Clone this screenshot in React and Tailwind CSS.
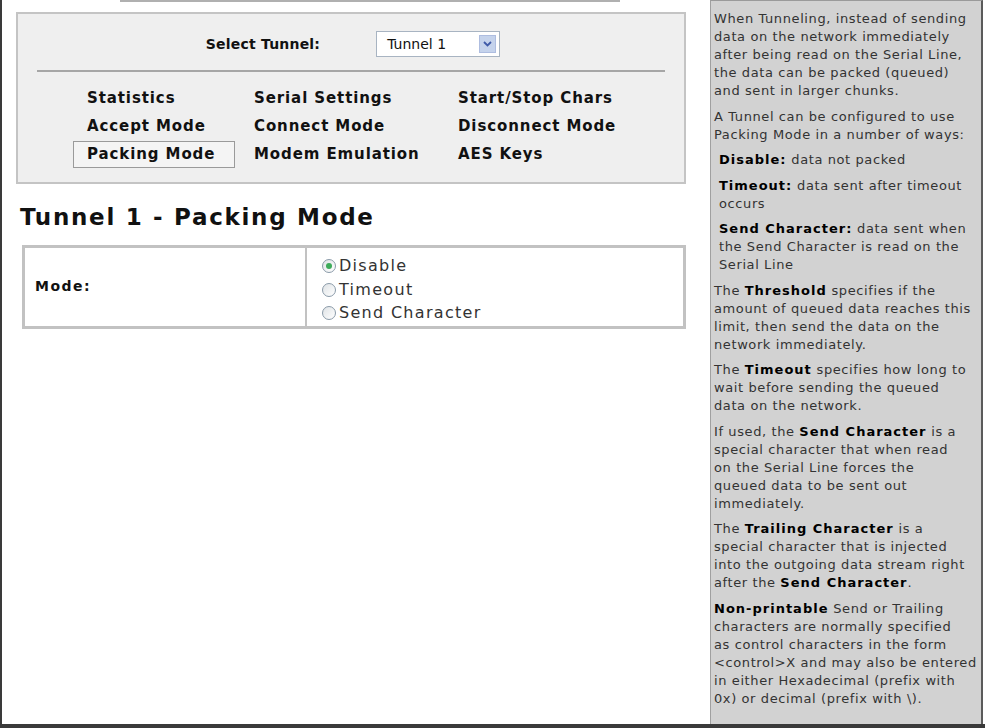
import { useState } from "react";

const links = [
  ["Statistics", "Serial Settings", "Start/Stop Chars"],
  ["Accept Mode", "Connect Mode", "Disconnect Mode"],
  ["Packing Mode", "Modem Emulation", "AES Keys"],
];

// help text, one entry per line as wrapped in the original panel; **x** = bold
const help = [
  {
    lines: [
      "When Tunneling, instead of sending",
      "data on the network immediately",
      "after being read on the Serial Line,",
      "the data can be packed (queued)",
      "and sent in larger chunks.",
    ],
  },
  { lines: ["A Tunnel can be configured to use", "Packing Mode in a number of ways:"] },
  { indent: true, lines: ["**Disable:** data not packed"] },
  { indent: true, lines: ["**Timeout:** data sent after timeout", "occurs"] },
  {
    indent: true,
    lines: ["**Send Character:** data sent when", "the Send Character is read on the", "Serial Line"],
  },
  {
    lines: [
      "The **Threshold** specifies if the",
      "amount of queued data reaches this",
      "limit, then send the data on the",
      "network immediately.",
    ],
  },
  {
    lines: ["The **Timeout** specifies how long to", "wait before sending the queued", "data on the network."],
  },
  {
    lines: [
      "If used, the **Send Character** is a",
      "special character that when read",
      "on the Serial Line forces the",
      "queued data to be sent out",
      "immediately.",
    ],
  },
  {
    lines: [
      "The **Trailing Character** is a",
      "special character that is injected",
      "into the outgoing data stream right",
      "after the **Send Character**.",
    ],
  },
  {
    lines: [
      "**Non-printable** Send or Trailing",
      "characters are normally specified",
      "as control characters in the form",
      "<control>X and may also be entered",
      "in either Hexadecimal (prefix with",
      "0x) or decimal (prefix with \\).",
    ],
  },
];

function Line({ text }) {
  const parts = text.split("**");
  return (
    <div className="whitespace-nowrap">
      {parts.map((p, i) =>
        i % 2 ? (
          <b key={i} className="text-black tracking-[1px]">{p}</b>
        ) : (
          <span key={i}>{p}</span>
        )
      )}
    </div>
  );
}

function Radio({ checked, label, onClick }) {
  return (
    <label className="flex items-center gap-[3px] h-[23.5px] cursor-pointer" onClick={onClick}>
      <span className="w-[14px] h-[14px] rounded-full border border-[#8a9aa8] bg-gradient-to-br from-[#dfe3e6] to-white flex items-center justify-center">
        {checked && <span className="w-[6px] h-[6px] rounded-full bg-[#3dab5a]" />}
      </span>
      <span>{label}</span>
    </label>
  );
}

export default function App() {
  const [mode, setMode] = useState("Disable");

  return (
    <div className="w-[985px] h-[728px] flex bg-white border-l-2 border-b-4 border-[#3a3a3a] overflow-hidden font-['DejaVu_Sans',sans-serif] text-[#111]">
      {/* main column */}
      <div className="w-[708px] shrink-0 flex flex-col">
        <div className="h-[3px] flex">
          <div className="ml-[118px] w-[500px] h-[2px] bg-[#b0b0b0]" />
        </div>

        {/* tunnel selector panel */}
        <div className="ml-[14px] mt-[9px] w-[670px] h-[172px] bg-[#efefef] border-2 border-[#c4c4c4] flex flex-col">
          <div className="flex items-center justify-center gap-[56px] h-[56px] pt-[4px] pl-[4px]">
            <span className="font-bold text-[14px] tracking-[0.2px]">Select Tunnel:</span>
            <div className="w-[124px] h-[26px] bg-white border border-[#a8b4c2] flex items-center pl-[10px] pr-[3px]">
              <span className="text-[14px] flex-1">Tunnel 1</span>
              <span className="w-[17px] h-[18px] bg-[#c5d3ec] border border-[#aebde0] flex items-center justify-center">
                <svg width="9" height="6" viewBox="0 0 9 6">
                  <path d="M1 1l3.5 3.5L8 1" stroke="#3f5aa8" strokeWidth="1.8" fill="none" />
                </svg>
              </span>
            </div>
          </div>
          <div className="mx-[19px] h-[2px] bg-[#a6a6a6]" />
          <div className="grid grid-cols-[167px_204px_1fr] pl-[69px] pt-[12px] font-bold text-[15px] tracking-[0.9px]">
            {links.map((row) =>
              row.map((t) => (
                <div key={t} className="h-[28px] flex items-center">
                  {t === "Packing Mode" ? (
                    <span className="ml-[-14px] h-[27px] w-[162px] px-[13px] flex items-center border border-[#9a9a9a] bg-[#f4f4f4] whitespace-nowrap">
                      {t}
                    </span>
                  ) : (
                    <span className="whitespace-nowrap">{t}</span>
                  )}
                </div>
              ))
            )}
          </div>
        </div>

        <h1 className="ml-[18px] mt-[16px] text-[23px] font-bold tracking-[1.7px] whitespace-nowrap">Tunnel 1 - Packing Mode</h1>

        <div className="ml-[20px] mt-[10px] w-[664px] h-[84px] border-[3px] border-[#c2c2c2] flex">
          <div className="w-[282px] border-r-2 border-[#c2c2c2] flex items-center pl-[10px] font-bold text-[14px] tracking-[1.5px]">
            Mode:
          </div>
          <div className="pl-[15px] pt-[7px] text-[16px] tracking-[1.3px] text-[#333]">
            {["Disable", "Timeout", "Send Character"].map((m) => (
              <Radio key={m} label={m} checked={mode === m} onClick={() => setMode(m)} />
            ))}
          </div>
        </div>
      </div>

      {/* help panel */}
      <div className="w-[273px] shrink-0 bg-[#d2d2d2] border-l border-[#a0a0a0] border-r-2 border-r-[#5a5a5a] border-t border-t-[#9a9a9a] pl-[3px] pr-[2px] pt-[9px] text-[13px] tracking-[0.6px] leading-[18px] text-[#333] flex flex-col gap-[7.5px] overflow-hidden">
        {help.map((p, i) => (
          <div key={i} className={p.indent ? "pl-[5px]" : ""}>
            {p.lines.map((l, j) => (
              <Line key={j} text={l} />
            ))}
          </div>
        ))}
      </div>
    </div>
  );
}
